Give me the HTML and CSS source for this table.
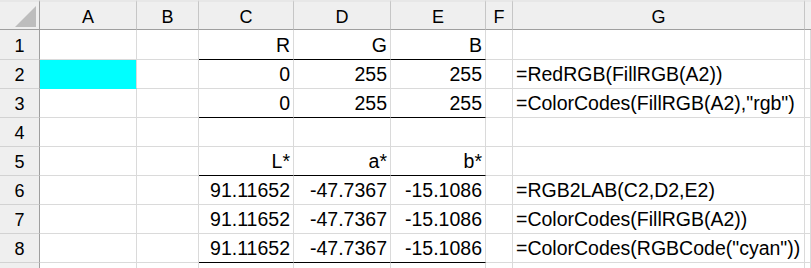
FILE: index.html
```html
<!DOCTYPE html>
<html>
<head>
<meta charset="utf-8">
<title>Sheet</title>
<link rel="stylesheet" href="styles.css">
</head>
<body>
<div class="sheet">
  <div class="hc corner"><span class="tri"></span></div>
  <div class="hc">A</div>
  <div class="hc">B</div>
  <div class="hc">C</div>
  <div class="hc">D</div>
  <div class="hc">E</div>
  <div class="hc">F</div>
  <div class="hc">G</div>
  <div class="hc last"></div>

  <div class="rh">1</div>
  <div class="c"></div><div class="c"></div>
  <div class="c num bb">R</div><div class="c num bb">G</div><div class="c num bb">B</div>
  <div class="c"></div><div class="c"></div><div class="c"></div>

  <div class="rh">2</div>
  <div class="c fill"></div><div class="c"></div>
  <div class="c num">0</div><div class="c num">255</div><div class="c num">255</div>
  <div class="c"></div><div class="c txt">=RedRGB(FillRGB(A2))</div><div class="c"></div>

  <div class="rh">3</div>
  <div class="c"></div><div class="c"></div>
  <div class="c num bb">0</div><div class="c num bb">255</div><div class="c num bb">255</div>
  <div class="c"></div><div class="c txt">=ColorCodes(FillRGB(A2),"rgb")</div><div class="c"></div>

  <div class="rh">4</div>
  <div class="c"></div><div class="c"></div>
  <div class="c"></div><div class="c"></div><div class="c"></div>
  <div class="c"></div><div class="c"></div><div class="c"></div>

  <div class="rh">5</div>
  <div class="c"></div><div class="c"></div>
  <div class="c num bb">L*</div><div class="c num bb">a*</div><div class="c num bb">b*</div>
  <div class="c"></div><div class="c"></div><div class="c"></div>

  <div class="rh">6</div>
  <div class="c"></div><div class="c"></div>
  <div class="c num">91.11652</div><div class="c num">-47.7367</div><div class="c num">-15.1086</div>
  <div class="c"></div><div class="c txt">=RGB2LAB(C2,D2,E2)</div><div class="c"></div>

  <div class="rh">7</div>
  <div class="c"></div><div class="c"></div>
  <div class="c num">91.11652</div><div class="c num">-47.7367</div><div class="c num">-15.1086</div>
  <div class="c"></div><div class="c txt">=ColorCodes(FillRGB(A2))</div><div class="c"></div>

  <div class="rh">8</div>
  <div class="c"></div><div class="c"></div>
  <div class="c num bb">91.11652</div><div class="c num bb">-47.7367</div><div class="c num bb">-15.1086</div>
  <div class="c"></div><div class="c txt">=ColorCodes(RGBCode("cyan"))</div><div class="c"></div>

  <div class="rh"></div>
  <div class="c"></div><div class="c"></div>
  <div class="c"></div><div class="c"></div><div class="c"></div>
  <div class="c"></div><div class="c"></div><div class="c"></div>
</div>
</body>
</html>
```

FILE: styles.css
```css
html, body {
  margin: 0;
  padding: 0;
  background: #ffffff;
  overflow: hidden;
}

.sheet {
  display: grid;
  grid-template-columns: 40px 97px 62px 95px 97px 95px 27px 292px 1fr;
  grid-template-rows: 30px 30px repeat(8, 29px);
  width: 811px;
  height: 268px;
  overflow: hidden;
  font-family: "Liberation Sans", Arial, sans-serif;
  color: #000;
}

.sheet > div {
  box-sizing: border-box;
  white-space: nowrap;
  overflow: visible;
}

.hc {
  background: #efefef;
  border-top: 2px solid #e7e7e7;
  border-right: 1px solid #c6c6c6;
  border-bottom: 1px solid #9f9f9f;
  font-size: 18px;
  display: flex;
  align-items: flex-end;
  justify-content: center;
  padding-bottom: 1px;
}

.hc.corner {
  position: relative;
  border-right: 1px solid #9f9f9f;
}

.hc.last {
  border-right: none;
}

.tri {
  position: absolute;
  left: 15px;
  top: 4px;
  width: 21px;
  height: 21px;
  background: #bdbdbd;
  clip-path: polygon(100% 0, 100% 100%, 0 100%);
}

.rh {
  background: #efefef;
  border-right: 1px solid #9f9f9f;
  border-bottom: 1px solid #d2d2d2;
  font-size: 18px;
  display: flex;
  align-items: flex-end;
  justify-content: center;
  padding-bottom: 2px;
}

.c {
  border-right: 1px solid #dadada;
  border-bottom: 1px solid #dadada;
  font-size: 19.5px;
  display: flex;
  align-items: flex-end;
  padding-bottom: 2px;
}

.num {
  justify-content: flex-end;
  padding-right: 3px;
}

.txt {
  justify-content: flex-start;
  padding-left: 3px;
}

.bb {
  border-bottom-color: #000000;
}

.fill {
  background: #00ffff;
  border-bottom-color: #00ffff;
}
```
